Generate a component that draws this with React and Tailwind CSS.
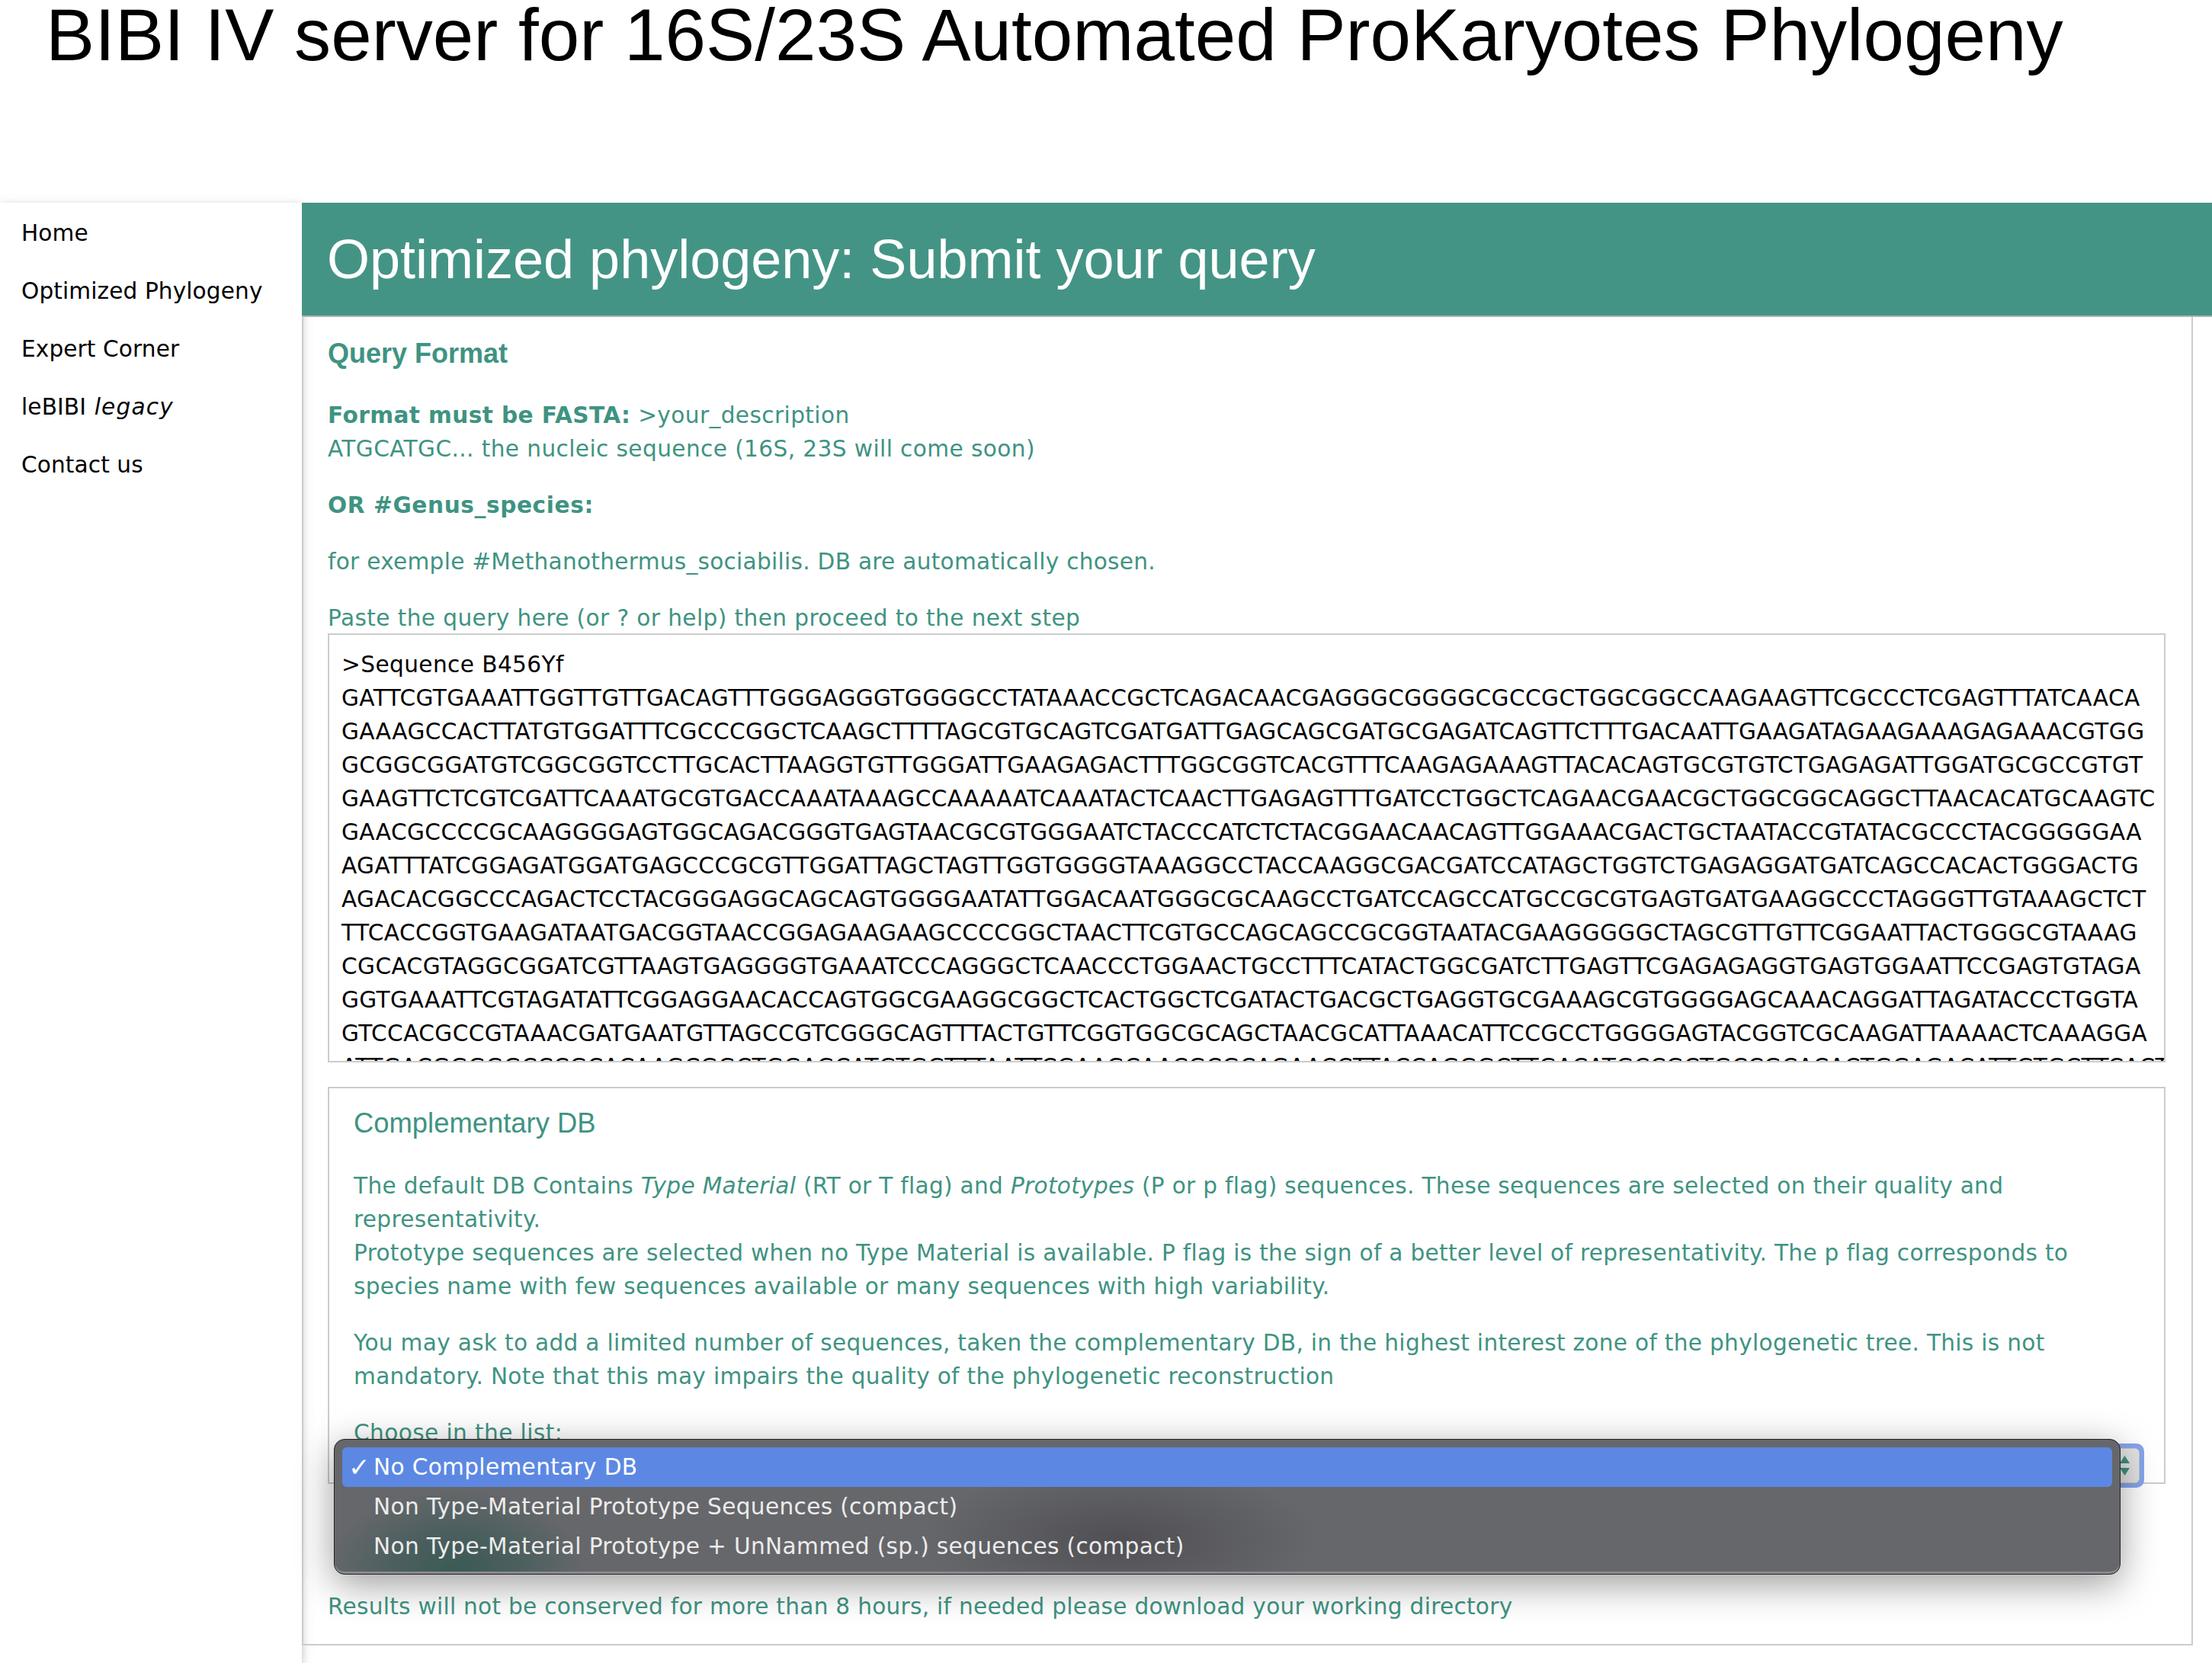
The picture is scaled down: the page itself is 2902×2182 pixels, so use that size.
import React from "react";

const sequence = [
  ">Sequence B456Yf",
  "GATTCGTGAAATTGGTTGTTGACAGTTTGGGAGGGTGGGGCCTATAAACCGCTCAGACAACGAGGGCGGGGCGCCGCTGGCGGCCAAGAAGTTCGCCCTCGAGTTTATCAACA",
  "GAAAGCCACTTATGTGGATTTCGCCCGGCTCAAGCTTTTAGCGTGCAGTCGATGATTGAGCAGCGATGCGAGATCAGTTCTTTGACAATTGAAGATAGAAGAAAGAGAAACGTGG",
  "GCGGCGGATGTCGGCGGTCCTTGCACTTAAGGTGTTGGGATTGAAGAGACTTTGGCGGTCACGTTTCAAGAGAAAGTTACACAGTGCGTGTCTGAGAGATTGGATGCGCCGTGT",
  "GAAGTTCTCGTCGATTCAAATGCGTGACCAAATAAAGCCAAAAATCAAATACTCAACTTGAGAGTTTGATCCTGGCTCAGAACGAACGCTGGCGGCAGGCTTAACACATGCAAGTC",
  "GAACGCCCCGCAAGGGGAGTGGCAGACGGGTGAGTAACGCGTGGGAATCTACCCATCTCTACGGAACAACAGTTGGAAACGACTGCTAATACCGTATACGCCCTACGGGGGAA",
  "AGATTTATCGGAGATGGATGAGCCCGCGTTGGATTAGCTAGTTGGTGGGGTAAAGGCCTACCAAGGCGACGATCCATAGCTGGTCTGAGAGGATGATCAGCCACACTGGGACTG",
  "AGACACGGCCCAGACTCCTACGGGAGGCAGCAGTGGGGAATATTGGACAATGGGCGCAAGCCTGATCCAGCCATGCCGCGTGAGTGATGAAGGCCCTAGGGTTGTAAAGCTCT",
  "TTCACCGGTGAAGATAATGACGGTAACCGGAGAAGAAGCCCCGGCTAACTTCGTGCCAGCAGCCGCGGTAATACGAAGGGGGCTAGCGTTGTTCGGAATTACTGGGCGTAAAG",
  "CGCACGTAGGCGGATCGTTAAGTGAGGGGTGAAATCCCAGGGCTCAACCCTGGAACTGCCTTTCATACTGGCGATCTTGAGTTCGAGAGAGGTGAGTGGAATTCCGAGTGTAGA",
  "GGTGAAATTCGTAGATATTCGGAGGAACACCAGTGGCGAAGGCGGCTCACTGGCTCGATACTGACGCTGAGGTGCGAAAGCGTGGGGAGCAAACAGGATTAGATACCCTGGTA",
  "GTCCACGCCGTAAACGATGAATGTTAGCCGTCGGGCAGTTTACTGTTCGGTGGCGCAGCTAACGCATTAAACATTCCGCCTGGGGAGTACGGTCGCAAGATTAAAACTCAAAGGA",
  "ATTGACGGGGGCCCGCACAAGCGGCTGGAGCATGTGGTTTAATTCGAAGCAACGCGCAGAACCTTACCAGGGCTTGACATGCCGCTGCCGCACACTGGAGACATTGTGCTTCACT",
].join("\n");

const navItems = ["Home", "Optimized Phylogeny", "Expert Corner", "leBIBI", "Contact us"];

const App = () => {
  return (
    <div className="min-h-screen bg-white font-['DejaVu_Sans',sans-serif] text-[29.6px] leading-[44px] tracking-[0.4px] text-[#3f9382]">
      <h1 className="h-[266px] pl-[60px] font-['Liberation_Sans',sans-serif] text-[96.2px] leading-[92px] font-normal tracking-normal text-black">
        BIBI IV server for 16S/23S Automated ProKaryotes Phylogeny
      </h1>

      <div className="flex min-h-[1916px]">
        <nav className="w-[396px] shrink-0 bg-white pt-[2px] tracking-[0.1px] text-black shadow-[0_4px_9px_rgba(0,0,0,0.16),0_4px_18px_rgba(0,0,0,0.12)]">
          {navItems.map((item) => (
            <div key={item} className="flex h-[76px] items-center px-[28px]">
              <span>
                {item}
                {item === "leBIBI" && <i className="tracking-[1.2px]"> legacy</i>}
              </span>
            </div>
          ))}
        </nav>

        <main className="min-w-0 flex-1">
          <div className="flex h-[150px] items-center border-b-2 border-[#b4b4b4] bg-[#449485] pl-[33px]">
            <h2 className="font-['Liberation_Sans',sans-serif] text-[72px] leading-none font-normal tracking-normal text-white">
              Optimized phylogeny: Submit your query
            </h2>
          </div>

          <div className="mr-[25px] h-[1743px] border-x-2 border-b-2 border-[#ccc] px-[32px]">
            <h3 className="pt-[26px] font-['Liberation_Sans',sans-serif] text-[36px] font-bold tracking-normal">Query Format</h3>

            <p className="mt-[37px]">
              <b>Format must be FASTA:</b> &gt;your_description
              <br />
              ATGCATGC... the nucleic sequence (16S, 23S will come soon)
            </p>
            <p className="mt-[30px] font-bold tracking-[0.6px]">OR #Genus_species:</p>
            <p className="mt-[30px] tracking-[0.27px]">for exemple #Methanothermus_sociabilis. DB are automatically chosen.</p>
            <p className="mt-[30px]">Paste the query here (or ? or help) then proceed to the next step</p>

            <textarea
              readOnly
              wrap="off"
              value={sequence}
              className="mt-[-2px] block h-[563px] w-[2411px] resize-none overflow-hidden border-2 border-[#ccc] px-[16px] pt-[17px] text-black outline-none"
            />

            <div className="mt-[32px] w-[2411px] border-2 border-[#ccc] px-[32px] pb-0">
              <h4 className="pt-[24px] font-['Liberation_Sans',sans-serif] text-[36.4px] font-normal tracking-normal">Complementary DB</h4>

              <p className="mt-[38px] tracking-[0.3px]">
                The default DB Contains <i>Type Material</i> (RT or T flag) and <i>Prototypes</i> (P or p flag) sequences. These sequences are selected on their quality and representativity.
                <br />
                Prototype sequences are selected when no Type Material is available. P flag is the sign of a better level of representativity. The p flag corresponds to species name with few sequences available or many sequences with high variability.
              </p>
              <p className="mt-[30px] tracking-[0.3px]">
                You may ask to add a limited number of sequences, taken the complementary DB, in the highest interest zone of the phylogenetic tree. This is not mandatory. Note that this may impairs the quality of the phylogenetic reconstruction
              </p>
              <p className="mt-[30px]">Choose in the list:</p>

              {/* select with its native menu open */}
              <div className="relative mt-[-8px] mb-[-7px] mr-[-6px] h-[58px] rounded-[10px] bg-[#86a6ec] p-[6px]">
                <div className="flex h-full items-center justify-end rounded-[6px] border border-[#c8c8c8] bg-[#e4e4e4] pr-[12px]">
                  <svg width="13" height="26" viewBox="0 0 13 26" className="text-[#3f8f7e]">
                    <path d="M6.5 0 13 10H0Z" fill="currentColor" />
                    <path d="M0 16H13L6.5 26Z" fill="currentColor" />
                  </svg>
                </div>

                <div className="absolute top-[-6px] left-[-26px] w-[2344px] rounded-[14px] border border-[#222] bg-[#66676b] bg-[radial-gradient(ellipse_170px_105px_at_160px_170px,#3b5a56,rgba(59,90,86,0.6)_50%,transparent),radial-gradient(ellipse_260px_95px_at_1030px_130px,#505054,transparent)] px-[10px] pt-[10px] pb-[10px] tracking-[0.33px] text-[#ececec] shadow-[0_12px_50px_rgba(0,0,0,0.4),inset_0_-3px_0_#8a8a8c]">
                  <div className="flex h-[52px] items-center rounded-[6px] bg-[#5c88e3] pl-[8px] text-white">
                    <span className="w-[33px] text-[34px]">✓</span>
                    <span>No Complementary DB</span>
                  </div>
                  <div className="flex h-[52px] items-center pl-[41px]">Non Type-Material Prototype Sequences (compact)</div>
                  <div className="flex h-[52px] items-center pl-[41px]">Non Type-Material Prototype + UnNammed (sp.) sequences (compact)</div>
                </div>
              </div>
            </div>

            <p className="mt-[139px] tracking-[0.27px]">Results will not be conserved for more than 8 hours, if needed please download your working directory</p>
          </div>
        </main>
      </div>
    </div>
  );
};

export default App;
